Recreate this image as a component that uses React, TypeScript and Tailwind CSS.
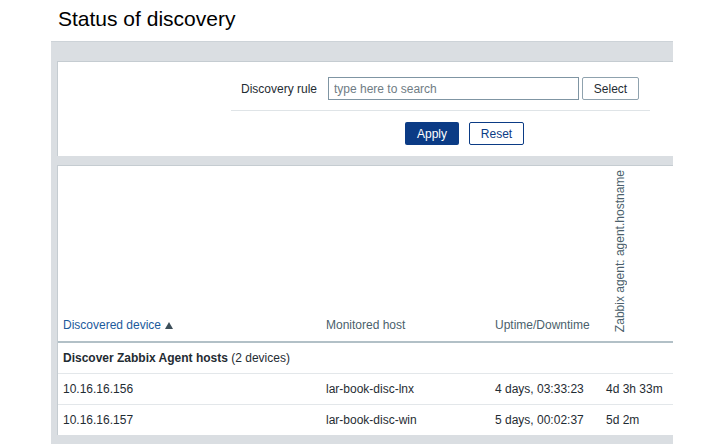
import React from "react";

export default function App() {
  const rows = [
    { ip: "10.16.16.156", host: "lar-book-disc-lnx", uptime: "4 days, 03:33:23", agent: "4d 3h 33m" },
    { ip: "10.16.16.157", host: "lar-book-disc-win", uptime: "5 days, 00:02:37", agent: "5d 2m" },
  ];

  return (
    <div className="w-[724px] h-[444px] overflow-hidden bg-white text-[12px] text-[#1f2c33] font-['Liberation_Sans',Arial,sans-serif]">
      {/* Page title */}
      <div className="h-[41px] pl-[58px] pt-[6px]">
        <h1 className="text-[21px] leading-[25px] text-black">Status of discovery</h1>
      </div>

      <div className="ml-[51px] w-[622px] bg-[#dadee2] border-t border-[#cdd3d8] pt-[19px] pl-[6px] pb-[10px]">
        {/* Filter */}
        <div className="bg-white border-l border-t border-[#c5ccd1] h-[95px] pt-[15px]">
          <div className="ml-[173px] w-[419px] pb-[10px] border-b border-[#dfe4e7]">
            <div className="flex items-center">
              <label className="w-[86px] text-right">Discovery rule</label>
              <input
                className="ml-[11px] w-[251px] h-[23px] border border-[#7f95a3] px-[5px] text-[12px] outline-none placeholder:text-[#6f7c84]"
                placeholder="type here to search"
              />
              <button className="ml-[3px] w-[57px] h-[23px] border border-[#8fa2ae] rounded-[2px] bg-white text-[#1f2c33]">
                Select
              </button>
            </div>
          </div>
          <div className="flex ml-[347px] mt-[11px] gap-[10px]">
            <button className="w-[54px] h-[23px] rounded-[2px] bg-[#0b3b85] text-white">Apply</button>
            <button className="w-[55px] h-[23px] rounded-[2px] border border-[#0b3b85] bg-white text-[#0b3b85]">
              Reset
            </button>
          </div>
        </div>

        {/* Results table */}
        <div className="mt-[9px] bg-white border-l border-t border-[#c5ccd1]">
          <table className="w-[615px] table-fixed border-collapse">
            <colgroup>
              <col className="w-[263px]" />
              <col className="w-[169px]" />
              <col className="w-[111px]" />
              <col className="w-[72px]" />
            </colgroup>
            <thead>
              <tr className="border-b-2 border-[#b2c0c7]">
                <th className="h-[176px] align-bottom text-left font-normal pl-[5px] pb-[7px]">
                  <span className="inline-flex items-center gap-[4px] text-[#1b5a9c]">
                    Discovered device
                    <svg width="8" height="7" viewBox="0 0 8 7">
                      <path d="M0 7 L4 0 L8 7 Z" fill="#3d4f5a" />
                    </svg>
                  </span>
                </th>
                <th className="align-bottom text-left font-normal pl-[5px] pb-[7px] text-[#4b5f6c]">Monitored host</th>
                <th className="align-bottom text-left font-normal pl-[5px] pb-[7px] text-[#4b5f6c]">Uptime/Downtime</th>
                <th className="align-bottom text-left font-normal pl-[12px] pb-[4px] text-[#4b5f6c]">
                  <span className="inline-block [writing-mode:vertical-rl] rotate-180 leading-[14px] whitespace-nowrap">
                    Zabbix agent: agent.hostname
                  </span>
                </th>
              </tr>
            </thead>
            <tbody>
              <tr className="border-b border-[#e3e7ea]">
                <td colSpan={4} className="h-[31px] pl-[5px]">
                  <span className="font-bold">Discover Zabbix Agent hosts</span> (2 devices)
                </td>
              </tr>
              {rows.map((r, i) => (
                <tr key={i} className={i === rows.length - 1 ? "" : "border-b border-[#e3e7ea]"}>
                  <td className="h-[31px] pl-[5px]">{r.ip}</td>
                  <td className="pl-[5px]">{r.host}</td>
                  <td className="pl-[5px]">{r.uptime}</td>
                  <td className="pl-[5px]">{r.agent}</td>
                </tr>
              ))}
            </tbody>
          </table>
        </div>
      </div>
    </div>
  );
}
